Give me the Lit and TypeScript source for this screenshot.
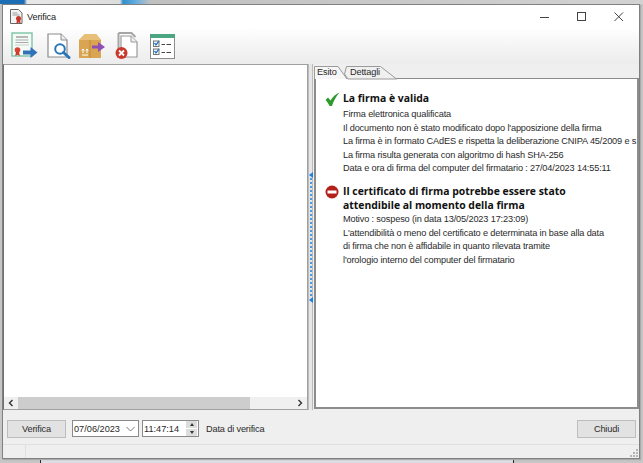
import { LitElement, html, css, svg } from "lit";
import { customElement } from "lit/decorators.js";

const certIcon = svg`<svg width="28" height="28" viewBox="0 0 28 28">
<rect x="1" y="1" width="20" height="23" fill="#f4fbf7" stroke="#7cc4a4" stroke-width="1.4"/>
<path d="M4.500 8h13M4.500 10.500h13" stroke="#a9a9a9" stroke-width="1" fill="none"/>
<rect x="5" y="4" width="12" height="2" fill="#b8b8b8"/>
<path d="M4 13h14" stroke="#ccc" stroke-width="1"/>
<circle cx="6.500" cy="18" r="2.800" fill="#d8402f"/><path d="M5 20l-.8 4 2.300-1.300 2.300 1.300-.8-4z" fill="#c93a2a"/>
<path d="M12 18.500h7.500v-3.500l7 5.500-7 5.500v-3.500H12z" fill="#2f72b8"/>
</svg>`;
const searchIcon = svg`<svg width="25" height="26" viewBox="0 0 25 26">
<path d="M1 1h13l6 6v17H1z" fill="#fff" stroke="#8c8c8c" stroke-width="1.200"/>
<path d="M14 1v6h6" fill="#eee" stroke="#8c8c8c" stroke-width="1"/>
<circle cx="13" cy="16" r="4.800" fill="#fff" stroke="#2a76b8" stroke-width="2"/>
<path d="M16.500 19.500l5.500 5" stroke="#2a76b8" stroke-width="3" stroke-linecap="round"/>
</svg>`;
const boxIcon = svg`<svg width="28" height="26" viewBox="0 0 28 26">
<path d="M1 7l6-6h11l5 6v18H1z" fill="#d9a552"/>
<path d="M7 1l-6 6h11l2-6zM14 1l-2 6h11l-5-6z" fill="#e8bf76"/>
<path d="M12 7v18" stroke="#c08a3a" stroke-width="1"/>
<path d="M4 22h6M5 20v-4l-1.200 1.500M5 16l1.200 1.500M9 20v-4l-1.200 1.500M9 16l1.200 1.500" stroke="#fff" stroke-width="1" fill="none"/>
<path d="M14 12.500h6v-3.500l7 5-7 5v-3.500h-6z" fill="#8e4fb5"/>
</svg>`;
const delIcon = svg`<svg width="24" height="28" viewBox="0 0 24 28">
<path d="M3.500 1h13l4 4" fill="none" stroke="#a5a5a5" stroke-width="2"/>
<path d="M3.500 1v17" stroke="#a5a5a5" stroke-width="2"/>
<path d="M6 4h10l6 6v15H6z" fill="#fff" stroke="#9a9a9a" stroke-width="1.200"/>
<path d="M16 4v6h6" fill="#efefef" stroke="#9a9a9a" stroke-width="1"/>
<circle cx="6.500" cy="21" r="6" fill="#c9382b"/>
<path d="M4 18.500l5 5M9 18.500l-5 5" stroke="#fff" stroke-width="1.800"/>
</svg>`;
const listIcon = svg`<svg width="25" height="25" viewBox="0 0 25 25">
<rect x=".5" y=".5" width="24" height="24" fill="#fff" stroke="#8d8d8d"/>
<rect x="0" y="0" width="25" height="4" fill="#4ba582"/>
<rect x="3.500" y="7" width="5.500" height="5.500" fill="#fff" stroke="#777"/>
<rect x="3.500" y="15" width="5.500" height="5.500" fill="#fff" stroke="#777"/>
<path d="M4.500 9l1.500 2 3-4M4.500 17l1.500 2 3-4" stroke="#2a76c0" stroke-width="1.300" fill="none"/>
<path d="M11.500 10.500h3.500M16.500 10.500h4.500M11.500 18.500h3.500M16.500 18.500h4.500" stroke="#444" stroke-width="1.200"/>
</svg>`;
const titleIcon = svg`<svg width="13" height="15" viewBox="0 0 13 15">
<path d="M.5.500h8l3.500 3.500v10.500h-11.500z" fill="#f4f4f4" stroke="#666"/>
<path d="M2.500 4h5M2.500 6h7" stroke="#999"/>
<circle cx="8.500" cy="9.500" r="2.500" fill="#c8352b"/><path d="M7 11l-.7 3.500 2.200-1 2.200 1-.7-3.500z" fill="#c8352b"/>
</svg>`;

@customElement("app-root")
export class AppRoot extends LitElement {
  static styles = css`
    :host {
      display: block;
      width: 643px;
      height: 463px;
      box-sizing: border-box;
      padding: 4px 3px 4px 2px;
      background: #c6c6c6;
      font-family: "Liberation Sans", Tahoma, sans-serif;
      font-size: 9.200px;
      letter-spacing: -0.150px;
      color: #2a2a2a;
      position: relative;
      overflow: hidden;
    }
    .wall { position: absolute; top: 0; left: 0; right: 0; height: 4px; background: linear-gradient(to right, #1c6fb5 0, #1c6fb5 24px, #e8e8e8 27px, #ddd 120px, #2f8fd0 123px, #6ab0df 137px, #c0c0c0 150px, #d2d2d2 100%); }
    .page { position: absolute; top: 459px; left: 40px; width: 472px; height: 4px; background: #dcdce4; border-left: 1px solid #222; border-right: 1px solid #222; overflow: hidden; }
    .window {
      position: relative;
      height: 100%;
      box-sizing: border-box;
      border: 1px solid #808080;
      background: #efefef;
      display: flex;
      flex-direction: column;
      box-shadow: 1px 1px 1px #aaa;
    }
    .chrome { background: linear-gradient(to bottom, #fff 0, #fff 22px, #ececec 58px); height: 59px; display: flex; flex-direction: column; flex: none; }
    .title { height: 23px; display: flex; align-items: center; padding: 0 0 0 7px; color: #222; }
    .title svg:first-child { margin-right: 4px; }
    .title .t { flex: 1; }
    .wb { width: 37px; display: flex; justify-content: center; }
    .tools { display: flex; align-items: center; height: 36px; padding-left: 6px; }
    .tool { display: flex; justify-content: center; align-items: center; height: 32px; flex: none; }
    .tool:nth-child(1) { width: 31px; }
    .tool:nth-child(2) { width: 38px; }
    .tool:nth-child(3) { width: 28px; }
    .tool:nth-child(4) { width: 41px; }
    .tool:nth-child(5) { width: 30px; }
    .main { height: 346px; flex: none; display: flex; }
    .left { width: 305px; flex: none; box-sizing: border-box; border: 1px solid #a0a0a0; border-left-color: #707070; background: #fff; display: flex; flex-direction: column; }
    .view { flex: 1; }
    .hbar { height: 12px; background: #f0f0f0; display: flex; align-items: center; }
    .arr { width: 14px; display: flex; justify-content: center; flex: none; }
    .thumb { width: 232px; height: 12px; background: #cdcdcd; }
    .track { flex: 1; }
    .split { width: 5px; flex: none; background: #e6e6e6; border-left: 1px solid #bbb; border-right: 1px solid #bbb; box-sizing: border-box; display: flex; flex-direction: column; align-items: center; justify-content: center; padding-top: 1px; }
    .split .dots { width: 2px; height: 119px; background: repeating-linear-gradient(to bottom, #4a9be0 0 2px, transparent 2px 4px); }
    .mark { width: 0; height: 0; border-top: 3px solid transparent; border-bottom: 3px solid transparent; border-right: 4px solid #1e80e0; }
    .tabs { width: 325px; flex: none; margin-left: 1px; display: flex; flex-direction: column; padding-top: 2px; box-sizing: border-box; height: 345px; }
    .tabbar { height: 12px; display: flex; align-items: flex-end; position: relative; flex: none; }
    .tabshape { position: absolute; left: 0; top: 0; overflow: visible; }
    .tab { position: relative; line-height: 12px; height: 12px; }
    .tab.a { width: 36px; padding-left: 3px; box-sizing: border-box; }
    .pane { flex: 1; border: solid #8c8c8c; border-width: 1px 2px 2px 2px; background: #fff; padding: 12px 0 0 9px; overflow: hidden; }
    .block { display: grid; grid-template-columns: 18px 1fr; }
    .block + .block { margin-top: 8px; }
    .block + .block .lines { margin-top: 1px; }
    .icon { padding-top: 1px; }
    .h { font-family: "Open Sans", sans-serif; font-weight: 700; font-size: 10.400px; letter-spacing: 0; line-height: 14px; color: #111; white-space: nowrap; }
    .lines { margin-top: 3px; white-space: nowrap; overflow: hidden; }
    .lines div { height: 13.600px; line-height: 13.600px; }
    .foot { height: 34px; flex: none; display: flex; align-items: center; padding: 2px 3px 0 4px; border-bottom: 1px solid #e0e0e0; box-sizing: border-box; margin-top: 1px; }
    .btn { width: 59px; height: 18px; box-sizing: border-box; border: 1px solid #bdbdbd; background: #e2e2e2; display: flex; align-items: center; justify-content: center; }
    .field { height: 17px; box-sizing: border-box; border: 1px solid #8a8a8a; background: #fff; display: flex; align-items: center; padding-left: 1px; letter-spacing: 0; }
    .date { width: 67px; margin-left: 6px; justify-content: space-between; padding-right: 3px; }
    .time { width: 57px; margin-left: 3px; justify-content: space-between; padding: 0 1px; }
    .spin { display: flex; flex-direction: column; gap: 1px; width: 11px; height: 15px; }
    .spin span { flex: 1; background: #ddd; display: flex; align-items: center; justify-content: center; }
    .up, .dn { width: 0; height: 0; border-left: 2.500px solid transparent; border-right: 2.500px solid transparent; }
    .up { border-bottom: 3px solid #333; }
    .dn { border-top: 3px solid #333; }
    .lbl { margin-left: 7px; flex: 1; }
    .status { flex: 1; display: flex; position: relative; }
    .status .sep { width: 22px; border-right: 1px solid #e0e0e0; }
    .grip { position: absolute; right: 1px; bottom: 1px; }
  `;

  render() {
    return html`
      <div class="wall"></div>
      <div class="page"></div>
      <div class="window">
        <div class="chrome">
          <div class="title">
            ${titleIcon}
            <span class="t">Verifica</span>
            <span class="wb"><svg width="10" height="10" viewBox="0 0 10 10"><path d="M0 5.500h9" stroke="#444"/></svg></span>
            <span class="wb"><svg width="10" height="10" viewBox="0 0 10 10"><rect x=".5" y=".5" width="8" height="8" fill="none" stroke="#444"/></svg></span>
            <span class="wb"><svg width="10" height="10" viewBox="0 0 10 10"><path d="M.5.500l8.500 8.500M9 .5l-8.500 8.500" stroke="#444" fill="none"/></svg></span>
          </div>
          <div class="tools">
            <span class="tool">${certIcon}</span>
            <span class="tool">${searchIcon}</span>
            <span class="tool">${boxIcon}</span>
            <span class="tool">${delIcon}</span>
            <span class="tool">${listIcon}</span>
          </div>
        </div>
        <div class="main">
          <div class="left">
            <div class="view"></div>
            <div class="hbar">
              <span class="arr"><svg width="6" height="8" viewBox="0 0 6 8"><path d="M4.500 1l-3 3 3 3" fill="none" stroke="#333" stroke-width="1.400"/></svg></span>
              <span class="thumb"></span>
              <span class="track"></span>
              <span class="arr"><svg width="6" height="8" viewBox="0 0 6 8"><path d="M1.500 1l3 3-3 3" fill="none" stroke="#333" stroke-width="1.400"/></svg></span>
            </div>
          </div>
          <div class="split"><span class="mark"></span><span class="dots"></span><span class="mark"></span></div>
          <div class="tabs">
            <div class="tabbar">
              <svg class="tabshape" width="84" height="13" viewBox="0 0 84 13">
                <path d="M.5 13V.5H24l9 12.500" fill="#f6f6f6" stroke="#9a9a9a"/>
                <path d="M30.500 8l2-7.500h34l16 12.500H34z" fill="#f0f0f0" stroke="#9a9a9a"/>
              </svg>
              <span class="tab a">Esito</span>
              <span class="tab b">Dettagli</span>
            </div>
            <div class="pane">
              <div class="block">
                <span class="icon"><svg width="15" height="14" viewBox="0 0 15 14"><path d="M.5 8L3 5.500l2.500 3C7.500 5 10.500 2 14.500.5 11 4.500 8.500 9 7 14H4.500C3.500 11.500 2 9.500.5 8z" fill="#2d9a2d"/></svg></span>
                <div>
                  <div class="h">La firma è valida</div>
                  <div class="lines">
                    <div>Firma elettronica qualificata</div>
                    <div>Il documento non è stato modificato dopo l'apposizione della firma</div>
                    <div>La firma è in formato CAdES e rispetta la deliberazione CNIPA 45/2009 e s.m.i.</div>
                    <div>La firma risulta generata con algoritmo di hash SHA-256</div>
                    <div>Data e ora di firma del computer del firmatario : 27/04/2023 14:55:11</div>
                  </div>
                </div>
              </div>
              <div class="block">
                <span class="icon"><svg width="14" height="14" viewBox="0 0 14 14"><circle cx="7" cy="7" r="6.500" fill="#b3201a"/><rect x="2.500" y="5.500" width="9" height="3" fill="#fff"/></svg></span>
                <div>
                  <div class="h">Il certificato di firma potrebbe essere stato<br />attendibile al momento della firma</div>
                  <div class="lines">
                    <div>Motivo : sospeso (in data 13/05/2023 17:23:09)</div>
                    <div>L'attendibilità o meno del certificato e determinata in base alla data</div>
                    <div>di firma che non è affidabile in quanto rilevata tramite</div>
                    <div>l'orologio interno del computer del firmatario</div>
                  </div>
                </div>
              </div>
            </div>
          </div>
        </div>
        <div class="foot">
          <div class="btn">Verifica</div>
          <div class="field date"><span>07/06/2023</span><svg width="9" height="6" viewBox="0 0 9 6"><path d="M.5 1l4 4 4-4" fill="none" stroke="#777"/></svg></div>
          <div class="field time"><span>11:47:14</span><span class="spin"><span><i class="up"></i></span><span><i class="dn"></i></span></span></div>
          <span class="lbl">Data di verifica</span>
          <div class="btn">Chiudi</div>
        </div>
        <div class="status">
          <span class="sep"></span>
          <svg class="grip" width="8" height="8" viewBox="0 0 8 8"><path d="M6 0h2v2H6zM3 3h2v2H3zM6 3h2v2H6zM0 6h2v2H0zM3 6h2v2H3zM6 6h2v2H6z" fill="#b5b5b5"/></svg>
        </div>
      </div>
    `;
  }
}
